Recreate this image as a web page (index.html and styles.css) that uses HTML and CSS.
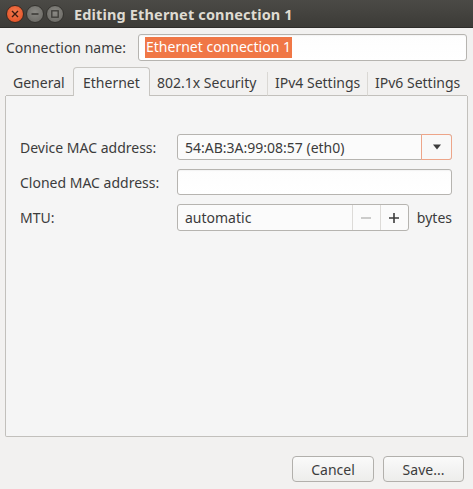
FILE: index.html
```html
<!DOCTYPE html>
<html>
<head>
<meta charset="utf-8">
<link rel="stylesheet" href="styles.css">
</head>
<body>
<div class="window">
  <div class="titlebar">
    <div class="wbtns">
      <span class="wbtn close"><svg width="8" height="8" viewBox="0 0 8 8"><path d="M1 1L7 7M7 1L1 7" stroke="#3a1a10" stroke-width="1.4"/></svg></span>
      <span class="wbtn"><svg width="10" height="10" viewBox="0 0 10 10"><path d="M1.5 5H8.5" stroke="#3c3b37" stroke-width="1.6"/></svg></span>
      <span class="wbtn"><svg width="10" height="10" viewBox="0 0 10 10"><rect x="1.8" y="1.8" width="6.4" height="6.4" fill="none" stroke="#3c3b37" stroke-width="1.3"/></svg></span>
    </div>
    <div class="title">Editing Ethernet connection 1</div>
  </div>
  <div class="content">
    <div class="name-row">
      <span class="label">Connection name:</span>
      <div class="entry name-entry"><span class="sel">Ethernet connection 1</span></div>
    </div>
    <div class="tabs">
      <div class="tab">General</div>
      <div class="tab active">Ethernet</div>
      <div class="tab">802.1x Security</div>
      <div class="tab sep">IPv4 Settings</div>
      <div class="tab sep">IPv6 Settings</div>
    </div>
    <div class="panel">
      <div class="form">
        <span class="label">Device MAC address:</span>
        <div class="combo">
          <div class="combo-text">54:AB:3A:99:08:57 (eth0)</div>
          <div class="combo-btn"><svg width="10" height="6" viewBox="0 0 10 6"><path d="M1 0.5H9L5 5.5Z" fill="#3c3c3c"/></svg></div>
        </div>
        <span class="label">Cloned MAC address:</span>
        <div class="entry wide"></div>
        <span class="label">MTU:</span>
        <div class="mtu-row">
          <div class="spin">
            <div class="spin-text">automatic</div>
            <div class="spin-btn minus"><svg width="12" height="12" viewBox="0 0 12 12"><path d="M1 6H11" stroke="#b8b8b6" stroke-width="1.4"/></svg></div>
            <div class="spin-btn plus"><svg width="12" height="12" viewBox="0 0 12 12"><path d="M1 6H11M6 1V11" stroke="#3c3c3c" stroke-width="1.6"/></svg></div>
          </div>
          <span class="label">bytes</span>
        </div>
      </div>
    </div>
    <div class="actions">
      <button class="btn cancel">Cancel</button>
      <button class="btn save">Save...</button>
    </div>
  </div>
</div>
</body>
</html>
```
FILE: styles.css
```css
* { box-sizing: border-box; }
html, body { margin: 0; padding: 0; }
body {
  width: 473px;
  height: 489px;
  background: #f2f1f0;
  font-family: "Noto Sans", "DejaVu Sans", sans-serif;
  font-size: 14px;
  color: #3c3c3c;
  overflow: hidden;
}
.window { width: 473px; height: 489px; display: flex; flex-direction: column; }
.titlebar {
  height: 28px;
  background: linear-gradient(#4b4a46, #3c3b37);
  display: flex;
  align-items: center;
  padding-left: 6px;
  border-bottom: 1px solid #2e2d2a;
}
.wbtns { display: flex; gap: 2px; }
.wbtn {
  width: 18px; height: 18px; border-radius: 50%;
  background: radial-gradient(circle at 50% 40%, #8a8984, #65645f);
  border: 1px solid #34332f;
  display: flex; align-items: center; justify-content: center;
}
.wbtn.close { background: radial-gradient(circle at 50% 40%, #f47b4f, #df4a1f); border-color: #3a2a22; }
.title {
  margin-left: 10px;
  color: #dfdbd2;
  font-weight: bold;
  font-size: 14.5px;
  letter-spacing: 0.15px;
}
.content { flex: 1; display: flex; flex-direction: column; padding: 6px 6px 0 5px; }
.name-row { display: flex; align-items: center; height: 27px; padding-left: 1px; }
.name-row .label { width: 132px; }
.entry {
  height: 27px;
  border: 1px solid #b6b4b0;
  border-radius: 3px;
  background: linear-gradient(#fdfdfd, #ffffff);
  box-shadow: inset 0 1px 1px rgba(0,0,0,0.04);
}
.name-entry { flex: 1; display: flex; align-items: center; padding-left: 6px; }
.sel { background: #f07746; color: #fff; padding: 1px 1px 2px 1px; line-height: 18px; }
.tabs {
  margin-top: 7px;
  height: 28px;
  display: flex;
  align-items: flex-end;
  padding-left: 1px;
}
.tab {
  height: 24px;
  display: flex; align-items: center;
  padding: 0 6px 2px 7px;
  border-bottom: 1px solid #c2c0bc;
  white-space: nowrap;
  flex-shrink: 0;
}
.tab.sep { border-left: 1px solid #dad8d4; padding-left: 7px; }
.tab:first-child { width: 67px; }
.tab.active {
  height: 29px;
  padding: 0 9px 0 9px;
  background: #f5f5f5;
  border: 1px solid #c8c6c2;
  border-bottom: none;
  border-radius: 4px 4px 0 0;
  width: 77px;
}
.tab:nth-child(3) { width: 117px; padding-left: 7px; }
.tab:nth-child(4) { width: 100px; }
.tab:nth-child(5) { flex: 1; flex-shrink: 1; }
.panel {
  height: 341px;
  background: #f5f5f5;
  border: 1px solid #c2c0bc;
  border-top: none;
  border-radius: 0 0 0 2px;
  padding: 38px 15px 0 14px;
  width: 463px;
}
.form {
  display: grid;
  grid-template-columns: 157px 275px;
  row-gap: 9px;
  align-items: center;
}
.combo {
  height: 26px;
  display: flex;
  border-radius: 3px;
  border: 1px solid #b6b4b0;
  background: #fbfbfb;
}
.combo-text { flex: 1; display: flex; align-items: center; padding-left: 7px; }
.combo-btn {
  width: 31px;
  margin: -1px -1px -1px 0;
  border: 1px solid #eda589;
  border-radius: 0 3px 3px 0;
  display: flex; align-items: center; justify-content: center;
  background: #f8f8f8;
}
.wide { height: 26px; }
.mtu-row { display: flex; align-items: center; gap: 8px; }
.spin {
  width: 233px; height: 27px;
  border: 1px solid #b6b4b0;
  border-radius: 3px;
  background: #fbfbfb;
  display: flex;
}
.spin-text { flex: 1; display: flex; align-items: center; padding-left: 7px; }
.spin-btn {
  width: 28px;
  border-left: 1px solid #dddbd8;
  display: flex; align-items: center; justify-content: center;
}
.actions {
  display: flex;
  justify-content: flex-end;
  gap: 9px;
  padding: 19px 3px 0 0;
}
.btn {
  height: 26px;
  font: inherit;
  color: #3c3c3c;
  border: 1px solid #b2b0ac;
  border-radius: 4px;
  background: linear-gradient(#fafafa, #ededeb);
  padding: 0;
}
.cancel { width: 82px; }
.save { width: 81px; }
```
